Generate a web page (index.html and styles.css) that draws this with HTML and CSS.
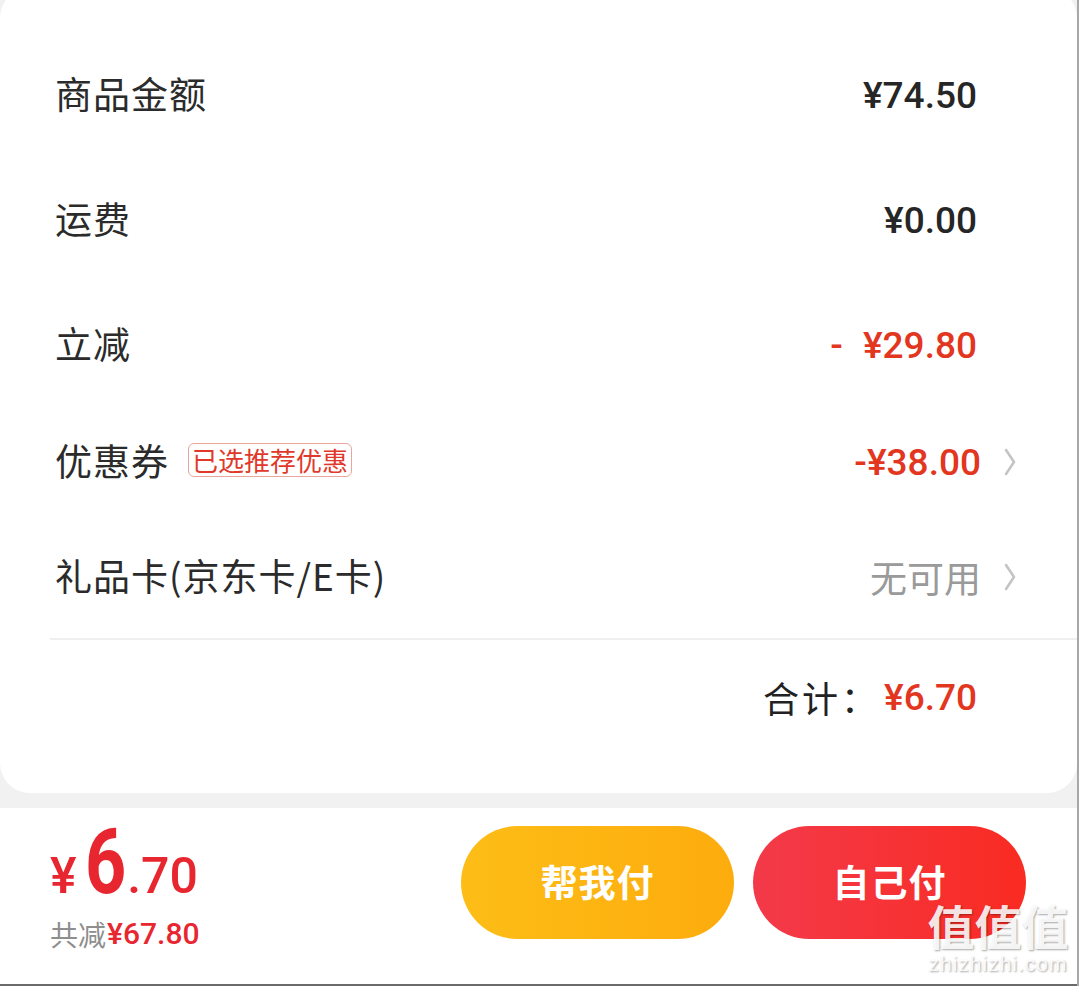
FILE: index.html
```html
<!DOCTYPE html>
<html lang="zh-CN">
<head>
<meta charset="utf-8">
<title>订单金额</title>
<link rel="stylesheet" href="styles.css">
</head>
<body>
<div class="page">
  <section class="card">
    <div class="row row-a">
      <span class="label">商品金额</span>
      <span class="value">¥74.50</span>
    </div>
    <div class="row row-a">
      <span class="label">运费</span>
      <span class="value">¥0.00</span>
    </div>
    <div class="row row-a">
      <span class="label">立减</span>
      <span class="value red"><span class="minus">-</span>¥29.80</span>
    </div>
    <div class="row row-b">
      <span class="label">优惠券<span class="tag">已选推荐优惠</span></span>
      <span class="value red with-arrow">-¥38.00<svg class="chev" viewBox="0 0 14 30" width="14" height="30"><path d="M3 3 L11 15 L3 27" fill="none" stroke="#c4c4c4" stroke-width="2.6" stroke-linecap="round" stroke-linejoin="round"/></svg></span>
    </div>
    <div class="row row-c">
      <span class="label">礼品卡(京东卡/E卡)</span>
      <span class="value muted with-arrow">无可用<svg class="chev" viewBox="0 0 14 30" width="14" height="30"><path d="M3 3 L11 15 L3 27" fill="none" stroke="#c4c4c4" stroke-width="2.6" stroke-linecap="round" stroke-linejoin="round"/></svg></span>
    </div>
    <div class="divider"></div>
    <div class="total">
      <span class="total-label">合计：</span><span class="total-value">¥6.70</span>
    </div>
  </section>

  <footer class="bar">
    <div class="price">
      <div class="price-main"><span class="yen">¥</span><span class="int">6</span><span class="dec">.70</span></div>
      <div class="price-sub"><span class="sub-label">共减</span><span class="sub-value">¥67.80</span></div>
    </div>
    <div class="actions">
      <button class="btn btn-yellow">帮我付</button>
      <button class="btn btn-red">自己付</button>
    </div>
    <div class="watermark">
      <div class="wm-big">值值值</div>
      <div class="wm-small">zhizhizhi.com</div>
    </div>
  </footer>
</div>
</body>
</html>
```

FILE: styles.css
```css
* { box-sizing: border-box; }

html, body {
  margin: 0;
  padding: 0;
  background: #f1f1f1;
}

body {
  width: 1079px;
  height: 986px;
  overflow: hidden;
  font-family: "Noto Sans CJK SC", "Noto Sans", sans-serif;
}

.page {
  width: 1079px;
  height: 986px;
  border-right: 2px solid #a8a8a8;
  display: flex;
  flex-direction: column;
  overflow: hidden;
}

.card {
  margin-top: -12px;
  width: 1077px;
  background: #ffffff;
  border-radius: 30px;
  padding: 45px 0 39px 0;
  display: flex;
  flex-direction: column;
}

.row {
  display: flex;
  align-items: center;
  justify-content: space-between;
  padding: 0 100px 0 55px;
}

.row-a { height: 125px; }
.row-b { height: 108px; }
.row-c { height: 122px; }

.label {
  font-size: 37px;
  color: #2b2b2b;
  letter-spacing: 1px;
  display: flex;
  align-items: center;
  margin-bottom: 5px;
}

.tag {
  margin-left: 19px;
  font-size: 26px;
  color: #e0392b;
  border: 1.5px solid #eaa59c;
  border-radius: 6px;
  padding: 0 3px;
  height: 34px;
  line-height: 32px;
  letter-spacing: 0;
}

.value {
  font-family: "Roboto", "Noto Sans CJK SC", sans-serif;
  font-size: 37px;
  font-weight: 500;
  color: #262626;
  display: flex;
  align-items: center;
}

.value.red { color: #e2361f; }

.minus { margin-right: 20px; }

.value.muted {
  font-family: "Noto Sans CJK SC", sans-serif;
  font-weight: 400;
  font-size: 37px;
  color: #9a9a9a;
}

.with-arrow {
  margin-right: -40px;
}

.chev {
  margin-left: 22px;
  display: block;
}

.divider {
  height: 2px;
  background: #efefef;
  margin-left: 50px;
}

.total {
  height: 114px;
  display: flex;
  align-items: center;
  justify-content: flex-end;
  padding-right: 100px;
}

.total-label {
  font-size: 36px;
  color: #222;
  letter-spacing: 3px;
  margin-right: 4px;
}

.total-value {
  font-family: "Roboto", sans-serif;
  font-size: 37px;
  font-weight: 500;
  color: #e2361f;
}

.bar {
  margin-top: 15px;
  flex: 1;
  background: #ffffff;
  border-bottom: 2px solid #6a6a6a;
  display: flex;
  align-items: flex-start;
  justify-content: space-between;
  padding: 18px 51px 0 50px;
  position: relative;
}

.price {
  display: flex;
  flex-direction: column;
  margin-top: -8px;
}

.price-main {
  font-family: "Roboto", sans-serif;
  color: #e8262f;
  font-weight: 500;
  line-height: 1;
  display: flex;
  align-items: baseline;
}

.yen { font-size: 50px; margin-right: 8px; }
.int {
  font-size: 90px;
  font-weight: 700;
  display: inline-block;
  transform: scaleX(0.8);
  transform-origin: left bottom;
  margin-right: -9px;
}
.dec { font-size: 50px; }

.price-sub {
  margin-top: 11px;
  display: flex;
  align-items: center;
  line-height: 1;
}

.sub-label {
  font-size: 28px;
  color: #8e8e8e;
}

.sub-value {
  font-family: "Roboto", sans-serif;
  font-size: 30px;
  font-weight: 500;
  color: #e8262f;
  margin-left: 1px;
}

.actions {
  display: flex;
  gap: 19px;
}

.btn {
  width: 273px;
  height: 113px;
  border: none;
  border-radius: 57px;
  color: #ffffff;
  font-family: "Noto Sans CJK SC", sans-serif;
  font-weight: 700;
  font-size: 37px;
  letter-spacing: 1px;
  padding: 0 0 4px 0;
}

.btn-yellow {
  background: linear-gradient(90deg, #fdbd17 0%, #fdac0d 100%);
}

.btn-red {
  background: linear-gradient(90deg, #f33a4a 0%, #f92b22 100%);
}

.watermark {
  position: absolute;
  right: 8px;
  bottom: 8px;
  width: 142px;
  display: flex;
  flex-direction: column;
  align-items: center;
  color: rgba(255, 255, 255, 0.88);
  text-shadow: 1px 1px 2px rgba(0, 0, 0, 0.35);
  pointer-events: none;
}

.wm-big {
  font-size: 47px;
  font-weight: 700;
  line-height: 50px;
}

.wm-small {
  margin-top: 2px;
  font-family: "Liberation Sans", sans-serif;
  font-size: 21px;
  line-height: 24px;
  letter-spacing: 1px;
}
```
